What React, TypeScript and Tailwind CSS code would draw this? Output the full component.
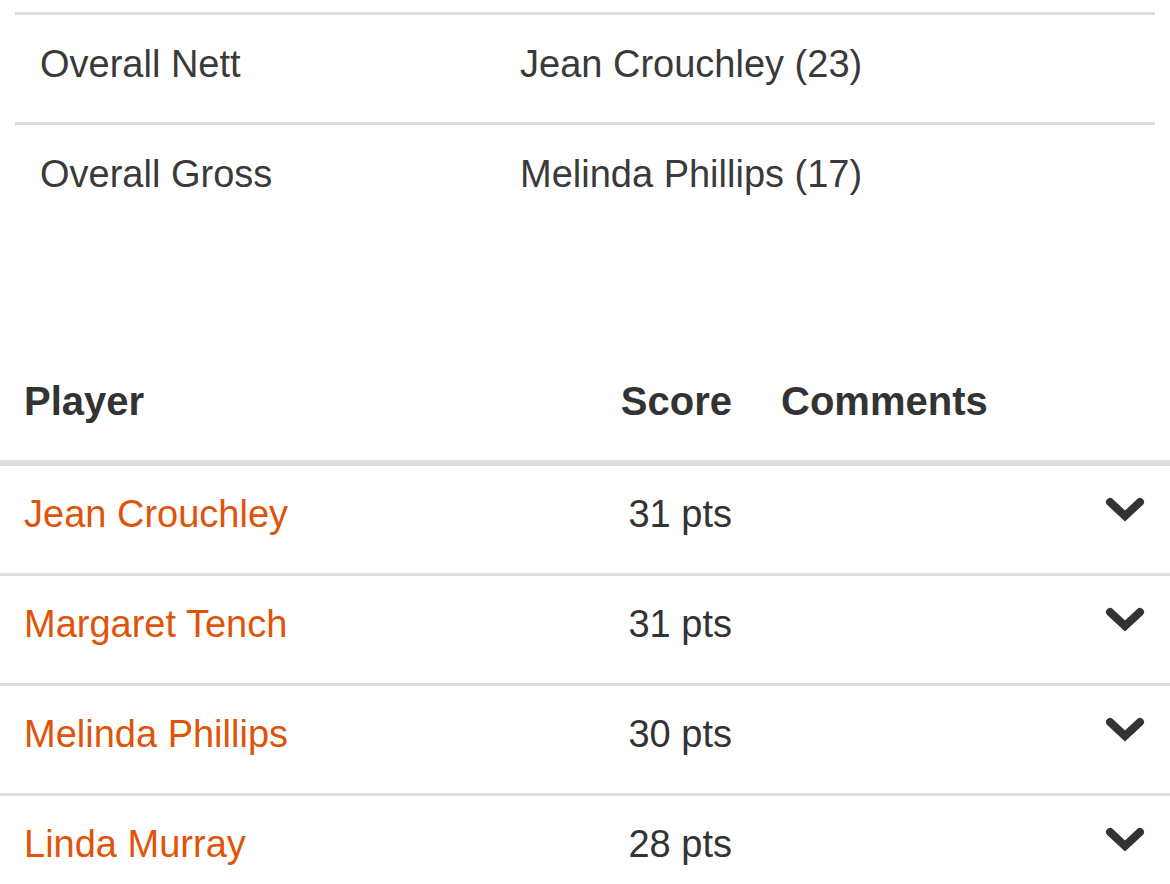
const winners = [
  { label: "Overall Nett", name: "Jean Crouchley", hcp: 23 },
  { label: "Overall Gross", name: "Melinda Phillips", hcp: 17 },
];

const players = [
  { name: "Jean Crouchley", score: 31 },
  { name: "Margaret Tench", score: 31 },
  { name: "Melinda Phillips", score: 30 },
  { name: "Linda Murray", score: 28 },
];

function Chevron() {
  return (
    <svg width="40" height="30" viewBox="0 0 40 30" fill="none">
      <path d="M5 6 L20 20 L35 6" stroke="currentColor" strokeWidth="8" strokeLinecap="round" strokeLinejoin="miter" />
    </svg>
  );
}

function WinnerRow({ label, name, hcp }: { label: string; name: string; hcp: number }) {
  return (
    <div className="flex border-t-[3px] border-[#dddddd] pt-[27px] pb-[36px] text-[38px] leading-[44px] text-[#3a3a3a]">
      <div className="w-[505px] pl-[25px]">{label}</div>
      <div>
        {name} ({hcp})
      </div>
    </div>
  );
}

function PlayerRow({ name, score }: { name: string; score: number }) {
  return (
    <div className="flex items-start border-t-[3px] border-[#dddddd] pt-[26px] pb-[37px] text-[38px] leading-[44px]">
      <div className="w-[500px] pl-[24px] text-[#e0540a]">{name}</div>
      <div className="w-[232px] text-right text-[#333333]">{score} pts</div>
      <div className="flex-1" />
      <div className="pr-[25px] pt-[4px] text-[#333333]">
        <Chevron />
      </div>
    </div>
  );
}

export default function App() {
  return (
    <div className="min-h-[884px] bg-white pt-[12px] font-['Liberation_Sans',Arial,sans-serif]">
      <div className="mx-[15px]">
        {winners.map((w) => (
          <WinnerRow key={w.label} {...w} />
        ))}
      </div>

      <div className="mt-[146px]">
        <div className="flex pb-[36px] text-[40px] font-bold leading-[46px] text-[#333333]">
          <div className="w-[500px] pl-[24px]">Player</div>
          <div className="w-[232px] text-right">Score</div>
          <div className="pl-[49px]">Comments</div>
        </div>
        <div className="border-t-[3px] border-[#dddddd]">
          {players.map((p) => (
            <PlayerRow key={p.name} {...p} />
          ))}
        </div>
      </div>
    </div>
  );
}
